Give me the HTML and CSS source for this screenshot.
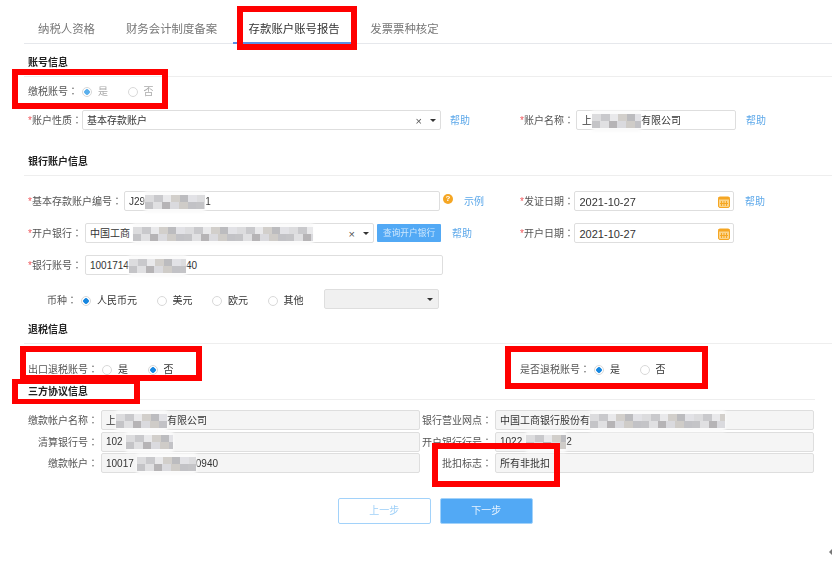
FILE: index.html
```html
<!DOCTYPE html>
<html lang="zh-CN">
<head>
<meta charset="utf-8">
<title>存款账户账号报告</title>
<link rel="stylesheet" href="styles.css">
</head>
<body>
<div class="page">
  <nav class="tabs">
    <a class="tab">纳税人资格</a>
    <a class="tab">财务会计制度备案</a>
    <a class="tab active">存款账户账号报告</a>
    <a class="tab">发票票种核定</a>
  </nav>

  <h3 class="title">账号信息</h3>
  <div class="row mt4">
    <span class="label">缴税账号<span class="c">：</span></span>
    <div class="radios dim">
      <span class="radio"><i class="dot on"></i>是</span>
      <span class="radio"><i class="dot"></i>否</span>
    </div>
  </div>
  <div class="row mt9">
    <div class="col">
      <span class="label w54"><b>*</b>账户性质<span class="c">：</span></span>
      <div class="field w359">基本存款账户<span class="tools"><span class="x">×</span><i class="caret"></i></span></div>
      <a class="help ml9">帮助</a>
    </div>
    <div class="col">
      <span class="label w56"><b>*</b>账户名称<span class="c">：</span></span>
      <div class="field w160 pl6">上<i class="mosaic m49"></i>有限公司</div>
      <a class="help ml10">帮助</a>
    </div>
  </div>

  <h3 class="title mt13">银行账户信息</h3>
  <div class="row mt15">
    <div class="col">
      <span class="label w96"><b>*</b>基本存款账户编号<span class="c">：</span></span>
      <div class="field w316">J29<i class="mosaic m62"></i>1</div>
      <i class="hint">?</i>
      <a class="help ml11">示例</a>
    </div>
    <div class="col">
      <span class="label w54"><b>*</b>发证日期<span class="c">：</span></span>
      <div class="field w160 date">2021-10-27<svg class="cal" viewBox="0 0 12 12"><rect x="0.5" y="1" width="11" height="10.5" rx="1.5" fill="#fbd48a" stroke="#f5a623"/><rect x="0.5" y="1" width="11" height="2.5" fill="#f5a623"/><path d="M3.5 5v5M6 5v5M8.500 5v5M2 7.500h8" stroke="#f5a623"/></svg></div>
      <a class="help ml11">帮助</a>
    </div>
  </div>
  <div class="row mt12">
    <div class="col">
      <span class="label w57"><b>*</b>开户银行<span class="c">：</span></span>
      <div class="field w289">中国工商<i class="mosaic m180"></i><span class="tools"><span class="x">×</span><i class="caret"></i></span></div>
      <button class="query">查询开户银行</button>
      <a class="help ml11">帮助</a>
    </div>
    <div class="col">
      <span class="label w54"><b>*</b>开户日期<span class="c">：</span></span>
      <div class="field w160 date">2021-10-27<svg class="cal" viewBox="0 0 12 12"><rect x="0.5" y="1" width="11" height="10.5" rx="1.5" fill="#fbd48a" stroke="#f5a623"/><rect x="0.5" y="1" width="11" height="2.5" fill="#f5a623"/><path d="M3.5 5v5M6 5v5M8.500 5v5M2 7.500h8" stroke="#f5a623"/></svg></div>
    </div>
  </div>
  <div class="row mt12">
    <span class="label w57"><b>*</b>银行账号<span class="c">：</span></span>
    <div class="field w358">1001714<i class="mosaic m57"></i>40</div>
  </div>
  <div class="row mt15 currency">
    <span class="label">币种<span class="c">：</span></span>
    <div class="radios">
      <span class="radio"><i class="dot sel"></i>人民币元</span>
      <span class="radio"><i class="dot"></i>美元</span>
      <span class="radio"><i class="dot"></i>欧元</span>
      <span class="radio"><i class="dot"></i>其他</span>
    </div>
    <div class="select"><i class="caret"></i></div>
  </div>

  <h3 class="title mt1">退税信息</h3>
  <div class="row mt15">
    <div class="col">
      <span class="label w70">出口退税账号<span class="c">：</span></span>
      <div class="radios">
        <span class="radio"><i class="dot"></i>是</span>
        <span class="radio"><i class="dot sel"></i>否</span>
      </div>
    </div>
    <div class="col">
      <span class="label w70">是否退税账号<span class="c">：</span></span>
      <div class="radios">
        <span class="radio"><i class="dot sel"></i>是</span>
        <span class="radio"><i class="dot"></i>否</span>
      </div>
    </div>
  </div>

  <h3 class="title short">三方协议信息</h3>
  <div class="agree">
    <span class="cell-label">缴款帐户名称<span class="c">：</span></span>
    <div class="ro">上<i class="mosaic m51"></i>有限公司</div>
    <span class="cell-label">银行营业网点<span class="c">：</span></span>
    <div class="ro">中国工商银行股份有<i class="mosaic m135"></i></div>
    <span class="cell-label">清算银行号<span class="c">：</span></span>
    <div class="ro">102<i class="mosaic m47"></i></div>
    <span class="cell-label">开户银行行号<span class="c">：</span></span>
    <div class="ro">1022<i class="mosaic m40"></i>2</div>
    <span class="cell-label">缴款帐户<span class="c">：</span></span>
    <div class="ro">10017<i class="mosaic m59"></i>0940</div>
    <span class="cell-label">批扣标志<span class="c">：</span></span>
    <div class="ro">所有非批扣</div>
  </div>

  <div class="actions">
    <button class="btn ghost">上一步</button>
    <button class="btn primary">下一步</button>
  </div>

  <i class="red r-tab"></i>
  <i class="red r-acct"></i>
  <i class="red r-export"></i>
  <i class="red r-agree"></i>
  <i class="red r-refund"></i>
  <i class="red r-flag"></i>
  <i class="handle"></i>
</div>
</body>
</html>
```

FILE: styles.css
```css
* { box-sizing: border-box; }
html, body { margin: 0; background: #fff; }
body { overflow: hidden; }

.page {
  position: relative;
  width: 832px;
  height: 573px;
  overflow: hidden;
  font: 10px/16px "Liberation Sans", "Noto Sans CJK SC", sans-serif;
  color: #444;
  filter: blur(0.4px);
}

/* fullwidth colon centred in its cell, as in the source font */
.c {
  font-family: "Noto Sans CJK TC", sans-serif;
  font-feature-settings: "locl" 0;
  -webkit-locale: "zh-TW";
}

/* tabs */
.tabs {
  display: flex;
  height: 44px;
  margin-left: 24px;
  border-bottom: 1px solid #e6e8ec;
}
.tab {
  height: 44px;
  padding: 21px 15.5px 0;
  font-size: 11.4px;
  line-height: 16px;
  color: #777;
  white-space: nowrap;
}
.tab:first-child { padding-left: 14px; }
.tab.active {
  margin: 0 -0.5px 0 0.5px;
  color: #333;
  border-bottom: 2px solid #5b8fe6;
}

/* section titles */
.title {
  margin: 0;
  margin-left: 24px;
  padding: 11px 0 5px 4px;
  font-size: 10px;
  line-height: 16px;
  font-weight: 700;
  color: #222;
  border-bottom: 1px solid #eeeeee;
}
.title.short {
  height: 21px;
  margin-right: 17px;
  padding: 5px 0 0 4px;
  line-height: 15px;
}
.mt1 { margin-top: 1px; }
.mt4 { margin-top: 4px; }
.mt9 { margin-top: 9px; }
.mt12 { margin-top: 12px; }
.mt13 { margin-top: 13px; }
.mt15 { margin-top: 15px; }

/* form rows */
.row {
  display: flex;
  align-items: center;
  height: 20px;
  padding-left: 28px;
}
.col {
  display: flex;
  align-items: center;
  flex: none;
  width: 492px;
}
.label {
  flex: none;
  padding-top: 1px;
  color: #555;
  white-space: nowrap;
}
.label b { color: #f0575c; font-weight: 400; }
.w54 { width: 54px; }
.w56 { width: 56px; }
.w57 { width: 57px; }
.w70 { width: 70px; }
.w96 { width: 96px; }

.field {
  position: relative;
  display: flex;
  align-items: center;
  flex: none;
  height: 20px;
  padding: 1px 0 0 4px;
  border: 1px solid #dedede;
  border-radius: 2px;
  background: #fff;
  color: #333;
  white-space: nowrap;
}
.w160 { width: 160px; }
.w289 { width: 289px; }
.w316 { width: 316px; }
.w358 { width: 358px; }
.w359 { width: 359px; }
.pl6 { padding-left: 5px; }
.date { font-size: 11px; padding-left: 4.5px; }

.tools {
  display: flex;
  align-items: center;
  gap: 8px;
  margin-left: auto;
  padding-right: 4px;
  color: #555;
}
.x { font-size: 11px; }
.caret {
  display: block;
  width: 0;
  height: 0;
  border: 3px solid transparent;
  border-top-color: #333;
  border-bottom: 0;
}
.cal {
  display: block;
  width: 12px;
  height: 12px;
  margin-left: auto;
  margin-right: 3px;
}
.help { color: #5ca8ea; flex: none; padding-top: 1px; }
.ml9 { margin-left: 9px; }
.ml10 { margin-left: 10px; }
.ml11 { margin-left: 11px; }

.hint {
  flex: none;
  width: 10px;
  height: 10px;
  margin: -5px 0 0 3px;
  border-radius: 50%;
  background: #f5a623;
  color: #fff;
  font: 700 8px/10px "Liberation Sans", sans-serif;
  text-align: center;
}
.query {
  flex: none;
  width: 64px;
  height: 18px;
  margin-left: 3px;
  padding: 0;
  border: 0;
  border-radius: 1px;
  background: #52a9f5;
  color: #cfe8fd;
  font: inherit;
  font-size: 8.7px;
}

/* radios */
.radios {
  display: flex;
  align-items: center;
  gap: 19.5px;
  margin-top: 2px;
  margin-left: 4px;
  color: #333;
}
.radio {
  display: flex;
  align-items: center;
  gap: 6px;
  white-space: nowrap;
}
.dim { color: #aaa; }
.dot {
  display: block;
  flex: none;
  width: 10px;
  height: 10px;
  border: 1px solid #d8d8d8;
  border-radius: 50%;
  background: #fff;
}
.dot.on { background: radial-gradient(circle, #5cb0ec 0 2.5px, #fff 3px); }
.dot.sel { background: radial-gradient(circle, #1787e0 0 2.5px, #fff 3px); }

.currency { padding-left: 47px; }
.select {
  display: flex;
  align-items: center;
  justify-content: flex-end;
  flex: none;
  width: 115px;
  height: 20px;
  margin: -2px 0 0 20px;
  padding-right: 5px;
  border: 1px solid #dedede;
  border-radius: 2px;
  background: #f0f0f0;
}

/* read-only grid */
.agree {
  display: grid;
  grid-template-columns: 73px 319px 75px 319px;
  grid-auto-rows: 20px;
  row-gap: 1.5px;
  margin-top: 10px;
  padding-left: 28px;
  align-items: center;
}
.cell-label {
  padding: 1px 3px 0 0;
  text-align: right;
  color: #555;
  white-space: nowrap;
}
.ro {
  display: flex;
  align-items: center;
  height: 20px;
  padding: 1px 0 0 4px;
  border: 1px solid #dedede;
  border-radius: 2px;
  background: #f5f5f5;
  color: #333;
  white-space: nowrap;
}

/* pixelated redactions */
.mosaic {
  position: relative;
  display: block;
  flex: none;
  height: 14px;
  background:
    repeating-linear-gradient(90deg,
      #dcdcde 0 9px, #c9c9cc 9px 18px, #e9e9eb 18px 26px,
      #d2cfcb 26px 35px, #bcbcbf 35px 43px, #e2e2e6 43px 52px) top / 100% 50% no-repeat,
    repeating-linear-gradient(90deg,
      #c4c4c7 0 8px, #e0e0e2 8px 17px, #b6b4b6 17px 25px,
      #dadade 25px 34px, #cfccc8 34px 43px, #c2c2c6 43px 51px) bottom / 100% 50% no-repeat;
  box-shadow: 0 -4px 3px 0 #fbfbfb, 0 4px 3px 0 #fbfbfb;
}
.m40 { width: 40px; margin-left: 4px; }
.m47 { width: 47px; margin-left: 3px; }
.m49 { width: 49px; }
.m51 { width: 51px; }
.m57 { width: 57px; }
.m59 { width: 59px; margin-left: 3px; }
.m62 { width: 60px; }
.m135 { width: 135px; }
.m180 { width: 180px; margin-left: 3px; }

/* buttons */
.actions {
  display: flex;
  gap: 9.5px;
  margin-top: 25px;
  padding-left: 338px;
}
.btn {
  width: 92.5px;
  height: 26px;
  padding: 0;
  border: 1px solid #a2d2fa;
  border-radius: 2px;
  font: inherit;
}
.ghost { background: #fff; color: #9fd0f8; }
.primary { background: #52a9f5; color: #e4f2ff; }

/* annotation frames */
.red {
  position: absolute;
  display: block;
  border: 6px solid #f00;
}
.r-tab { left: 237px; top: 6px; width: 120px; height: 44px; }
.r-acct { left: 12px; top: 69px; width: 156px; height: 40px; }
.r-export { left: 20px; top: 346px; width: 182px; height: 35px; }
.r-agree { left: 12px; top: 379px; width: 128px; height: 25px; border-width: 5px 6px; }
.r-refund { left: 505px; top: 346px; width: 203px; height: 43px; }
.r-flag { left: 432px; top: 443px; width: 128px; height: 44px; }

.handle {
  position: absolute;
  right: 0;
  top: 549px;
  width: 0;
  height: 0;
  border: 3px solid transparent;
  border-right-color: #777;
  border-left: 0;
}
```
